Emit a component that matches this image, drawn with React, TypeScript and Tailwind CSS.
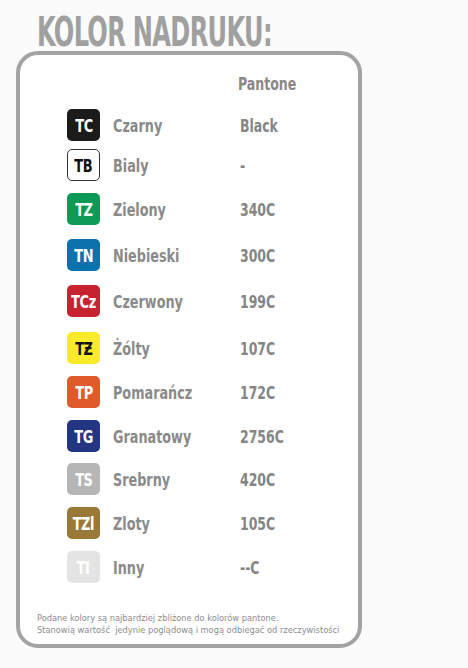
const rows = [
  { code: "TC", name: "Czarny", pantone: "Black", badge: "bg-[#1b1b1b] text-white", h: "h-[40px]" },
  { code: "TB", name: "Bialy", pantone: "-", badge: "bg-white text-[#111] border border-[#333]", h: "h-[44px]" },
  { code: "TZ", name: "Zielony", pantone: "340C", badge: "bg-[#0d9a55] text-white", h: "h-[46px]" },
  { code: "TN", name: "Niebieski", pantone: "300C", badge: "bg-[#0b72ae] text-white", h: "h-[46px]" },
  { code: "TCz", name: "Czerwony", pantone: "199C", badge: "bg-[#c6222f] text-white", h: "h-[47px]" },
  { code: "TƵ", name: "Żólty", pantone: "107C", badge: "bg-[#fbe92c] text-[#111]", h: "h-[44px]" },
  { code: "TP", name: "Pomarańcz", pantone: "172C", badge: "bg-[#e05a2c] text-white", h: "h-[44px]" },
  { code: "TG", name: "Granatowy", pantone: "2756C", badge: "bg-[#243581] text-white", h: "h-[43px]" },
  { code: "TS", name: "Srebrny", pantone: "420C", badge: "bg-[#b6b6b6] text-white", h: "h-[44px]" },
  { code: "TZl", name: "Zloty", pantone: "105C", badge: "bg-[#9a7938] text-white", h: "h-[44px]" },
  { code: "TI", name: "Inny", pantone: "--C", badge: "bg-[#e4e4e4] text-white", h: "h-[44px]" },
];

const cond = { fontFamily: '"DejaVu Sans Condensed", "Liberation Sans Narrow", "Liberation Sans", sans-serif' };

export default function App() {
  return (
    <div className="w-[468px] h-[668px] bg-[#fbfbfb] relative overflow-hidden" style={cond}>
      <div className="pl-[16px] pt-[12px] w-[362px]">
        {/* Title */}
        <div className="h-[40px] pl-[21px] relative z-10">
          <h1 className="text-[40px] leading-[40px] font-bold text-[#a0a0a0] tracking-[-1px] origin-left scale-x-[0.67] whitespace-nowrap">
            KOLOR NADRUKU:
          </h1>
        </div>

        {/* Card */}
        <div className="w-[346px] h-[597px] border-[4px] border-[#a3a3a3] rounded-[22px] bg-white flex flex-col -mt-px">
          <div className="pt-[16px] pl-[218px] text-[17px] font-bold text-[#888] h-[54px] leading-[26px]">
            <span className="inline-block origin-left scale-x-[0.82]">Pantone</span>
          </div>
          <div className="flex flex-col pl-[47px]">
            {rows.map((r) => (
              <div key={r.code} className={`flex items-start ${r.h}`}>
                <div
                  className={`w-[33px] h-[32px] rounded-[5px] flex items-center justify-center text-[18px] font-bold ${r.badge}`}
                >
                  <span className="inline-block scale-x-[0.8] tracking-[-0.5px]">{r.code}</span>
                </div>
                <div className="w-[140px] h-[32px] pl-[13px] flex items-center text-[18px] font-bold text-[#8a8a8a]">
                  <span className="inline-block origin-left scale-x-[0.79]">{r.name}</span>
                </div>
                <div className="h-[32px] flex items-center text-[18px] font-bold text-[#858585]">
                  <span className="inline-block origin-left scale-x-[0.77]">{r.pantone}</span>
                </div>
              </div>
            ))}
          </div>
          <div className="mt-auto pb-[8px] pl-[17px] text-[9.2px] leading-[12px] text-[#8c8c8c]">
            <p>Podane kolory są najbardziej zbliżone do kolorów pantone.</p>
            <p>Stanowią wartość&nbsp; jedynie poglądową i mogą odbiegać od rzeczywistości</p>
          </div>
        </div>
      </div>
    </div>
  );
}
